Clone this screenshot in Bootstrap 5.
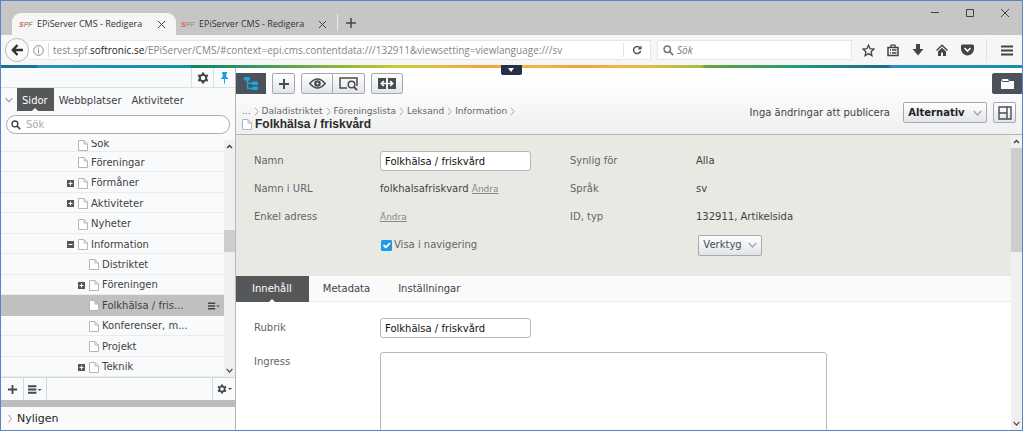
<!DOCTYPE html>
<html lang="sv">
<head>
<meta charset="utf-8">
<meta name="viewport" content="width=device-width, initial-scale=1">
<title>EPiServer CMS - Redigera</title>
<link href="https://cdn.jsdelivr.net/npm/bootstrap@5.3.0/dist/css/bootstrap.min.css" rel="stylesheet">
<style>
  body { font-family: "DejaVu Sans", sans-serif; font-size: 10px; line-height: 14px; color: #3f4244; }
  button, input, textarea { font: inherit; color: inherit; }
  svg { display: block; flex: none; }
  .app-window { border: 1px solid #5b82c8; background: #fff; }

  /* browser frame */
  .browser-ui { font-family: "Open Sans", sans-serif; }
  .title-strip { height: 34px; background: #c6c6c6; padding-left: 11px; color: #333; }
  .page-tab { height: 22px; width: 161px; padding: 0 10px 0 5px; font-size: 9px; }
  .page-tab.current { background: #f6f6f6; border-radius: 9px 9px 0 0; width: 164px; padding: 0 10px 0 7px; }
  .plain-btn { background: none; border: 0; padding: 0; color: #444; display: flex; align-items: center; justify-content: center; }
  .favicon { font: italic bold 7px "Liberation Sans", sans-serif; color: #a98; width: 14px; }
  .favicon b { color: #e2574c; }
  .new-tab { height: 17px; }
  .window-btns { gap: 22px; padding: 5px 11px 0 0; }
  .address-row { height: 30px; background: #f6f6f6; padding-left: 4px; }
  .back-btn { width: 24px; height: 24px; border: 1px solid #bbb; border-radius: 50%; background: #fafafa; color: #333; }
  .field-box { height: 20px; background: #fff; border: 1px solid #e6e6e6; }
  .address-field { padding-left: 4px; border-left: 0; }
  .address-text { font-size: 10px; color: #858585; border-left: 1px solid #ddd; padding-left: 4px; margin-left: 4px; }
  .address-text b { color: #222; font-weight: 400; }
  .search-field { width: 195px; margin-left: 6px; padding: 0 5px; color: #777; }
  .search-field input { border: 0; outline: 0; width: 100%; font-size: 10px; font-style: italic; padding: 0 0 0 3px; background: none; }
  .search-field input::placeholder { color: #777; opacity: 1; }
  .browser-tools { width: 170px; padding: 0 9px 0 10px; color: #444; }
  .browser-tools .menu-btn { border-left: 1px solid #e2e2e2; padding-left: 14px; height: 24px; }
  .rainbow { height: 3px; background: linear-gradient(90deg,#1a6f91 0,#1c7396 3.5%,#2a8cc4 3.6%,#178fb0 14%,#0f97a4 18.4%,#118262 18.8%,#2f9566 24%,#8db53c 33%,#cbc937 39%,#efb23c 45%,#f3a43a 47%,#f2b53e 53%,#eda338 57%,#f3b43e 60%,#ddbd3c 64%,#a4bb45 68.6%,#67a33c 69%,#239a78 78%,#1a6a8f 86.8%,#2b8ec6 87.3%,#1590a8 100%); }
  .drop-handle { position: absolute; left: 50%; top: -3px; width: 21px; height: 10px; margin-left: -11px; background: #22304a; color: #fff; border-radius: 0 0 2px 2px; z-index: 2; }
  .workspace, .fill-area { min-height: 0; }

  /* navigation pane */
  .side-pane { width: 235px; border-right: 1px solid #b4b8bb; background: #f9fafb; }
  .pane-tools { height: 20px; border-bottom: 1px solid #dcdfe0; }
  .pane-tools button { width: 22px; border-left: 1px solid #dcdfe0; }
  .pane-tabs { height: 23px; }
  .pane-tabs a, .form-tabs a { color: #3f4244; text-decoration: none; position: relative; display: flex; align-items: center; }
  .pane-tabs a { padding: 2px 5px 0; }
  .pane-tabs a.chosen, .form-tabs a.chosen { background: #555759; color: #fff; }
  .pane-tabs a.chosen { padding: 2px 6px 0 5px; }
  a.chosen::after { content: ""; position: absolute; bottom: 0; left: 50%; margin-left: -3px; border: 3px solid transparent; border-top: 0; border-bottom-color: #fff; }
  .tree-search { height: 19px; margin: 4px 5px 6px; border: 1px solid #a9adb0; border-radius: 10px; background: #fff; padding: 0 4px; }
  .tree-search input { border: 0; outline: 0; background: none; width: 100%; padding: 0 5px; }
  .tree-search input::placeholder { color: #aaa; opacity: 1; }
  .tree-row { flex: 1 1 0; min-height: 20px; max-height: 21px; border-bottom: 1px solid #e9eceb; padding: 2px 0 0 66px; }
  .tree-row.partial { flex: 0 0 12px; min-height: 0; padding-top: 0; overflow: hidden; align-items: flex-end; }
  .tree-row.deep { padding-left: 77px; }
  .tree-row.picked { background: #c0c0c0; border-color: #c0c0c0; }
  .twisty { width: 7px; color: #555; margin-right: 4px; }
  .page-icon { margin-right: 3px; }
  .scroller { width: 11px; background: #f0f0f1; color: #444; }
  .scroller .arrow { height: 13px; }
  .scroller .thumb { background: #cdcdcd; }
  .pane-foot { height: 23px; border-top: 1px solid #d5d8da; }
  .pane-foot button { width: 23px; border-right: 1px solid #d5d8da; color: #45484a; }
  .pane-foot button:last-child { border-right: 0; border-left: 1px solid #d5d8da; }
  .splitter { height: 7px; background: #b9bdc0; }
  .recent { height: 23px; font-size: 11px; background: #fafafa; color: #222; border: 0; padding: 0 6px; gap: 4px; }

  /* editing area */
  .edit-head { height: 67px; background: linear-gradient(#fff 20%, #eeeff0); border-bottom: 1px solid #b2b5b7; padding-top: 5px; }
  .head-tools { gap: 6px; }
  .tool-btn { border: 1px solid #a6a9b3; border-radius: 2px; background: linear-gradient(#fff, #e2e4e8); color: #484d54; padding: 0; width: 23px; height: 21px; display: flex; align-items: center; justify-content: center; }
  .tool-btn.wide { width: 32px; }
  .dark-btn { background: #4c5259; border-color: #4c5259; color: #fff; width: 30px; }
  .head-info { padding: 5px 6px 0; }
  .head-actions { gap: 6px; padding-top: 3px; }
  .options-btn { width: 84px; gap: 8px; margin-left: 7px; color: #222; }
  .crumbs { font-size: 9px; gap: 3px; line-height: 13px; padding-top: 6px; }
  .crumbs, .crumbs a { color: #666; text-decoration: none; }
  .crumbs svg { color: #aaa; }
  .page-name { font: bold 12px/13px "Liberation Sans", sans-serif; color: #2b2b2b; margin: 0; }
  .props { background: #e8e9e3; padding: 12px 18px 17px; }
  .props-grid { display: grid; grid-template-columns: 126px 190px 126px 1fr; grid-auto-rows: 28px; align-items: center; }
  .caption { color: #62666a; }
  .value-box { width: 151px; height: 20px; border: 1px solid #b5b8ba; border-radius: 3px; background: #fff; color: #111; padding: 0 4px; }
  .change-link { font-size: 9px; color: #888; }
  .form-check-input.tick { width: 11px; height: 11px; margin: 0 2px 0 1px; border-radius: 1px; }
  .tick:checked { background-color: #1e9be8; border-color: #1e9be8; background-size: 12px; }
  .work-btn { width: 64px; gap: 6px; margin-left: 2px; }
  .form-tabs { height: 26px; background: #fafafa; border-bottom: 1px solid #eee; }
  .form-tabs a { padding: 0 14px; }
  .form-tabs a.chosen { padding: 0 17px 0 16px; height: 26px; }
  .fields { display: grid; grid-template-columns: 126px 447px; row-gap: 14px; padding: 16px 18px 0; }
  .fields .caption { padding-top: 3px; }
  .intro-box { width: 447px; height: 120px; border: 1px solid #b5b8ba; border-radius: 3px; resize: none; }
</style>
</head>
<body>
<svg width="0" height="0" class="position-absolute" aria-hidden="true">
  <symbol id="i-x" viewBox="0 0 9 9"><path d="M1 1l7 7M8 1L1 8" stroke="currentColor" fill="none"/></symbol>
  <symbol id="i-plus" viewBox="0 0 12 12"><path d="M6 1v10M1 6h10" stroke="currentColor" stroke-width="2" fill="none"/></symbol>
  <symbol id="i-doc" viewBox="0 0 10 11"><path d="M.5.5h5.500L9.500 4v6.500h-9zM6 .5V4h3.500" fill="#fff" stroke="#b3b6b8"/></symbol>
  <symbol id="i-more" viewBox="0 0 7 7"><path d="M0 0h7v7H0z" fill="#555"/><path d="M1.500 3.500h4M3.500 1.500v4" stroke="#fff"/></symbol>
  <symbol id="i-less" viewBox="0 0 7 7"><path d="M0 0h7v7H0z" fill="#555"/><path d="M1.500 3.500h4" stroke="#fff"/></symbol>
  <symbol id="i-gear" viewBox="0 0 12 12"><circle cx="6" cy="6" r="3.200" fill="none" stroke="currentColor" stroke-width="2"/><path d="M6 .5v2M6 9.500v2M1.200 3.200l1.800 1M9 7.800l1.800 1M1.200 8.800l1.800-1M9 4.200l1.800-1" stroke="currentColor" stroke-width="2.300"/></symbol>
  <symbol id="i-list" viewBox="0 0 15 9"><path d="M0 1h9M0 4.500h9M0 8h9" stroke="currentColor" stroke-width="2"/><path d="M10.500 4h4l-2 2z" fill="currentColor"/></symbol>
  <symbol id="i-up" viewBox="0 0 7 5"><path d="M1 4l2.500-2.500L6 4" fill="none" stroke="currentColor" stroke-width="1.500"/></symbol>
  <symbol id="i-down" viewBox="0 0 9 6"><path d="M.8 1l3.700 4 3.700-4" fill="none" stroke="currentColor" stroke-width="1.500"/></symbol>
  <symbol id="i-right" viewBox="0 0 5 9"><path d="M1 .8l3 3.700-3 3.700" fill="none" stroke="currentColor"/></symbol>
  <symbol id="i-lens" viewBox="0 0 11 11"><circle cx="4.300" cy="4.300" r="3.200" fill="none" stroke="currentColor" stroke-width="1.500"/><path d="M6.700 6.700l3.500 3.500" stroke="currentColor" stroke-width="1.800"/></symbol>
</svg>

<div class="app-window vh-100 d-flex flex-column overflow-hidden">
  <header class="browser-ui flex-shrink-0">
    <div class="title-strip d-flex align-items-end">
      <div class="page-tab current d-flex align-items-center">
        <span class="favicon"><b>S</b>PF</span><span class="ms-1 flex-fill">EPiServer CMS - Redigera</span>
        <button class="plain-btn" aria-label="Stäng flik"><svg width="9" height="9"><use href="#i-x"/></svg></button>
      </div>
      <div class="page-tab d-flex align-items-center">
        <span class="favicon"><b>S</b>PF</span><span class="ms-1 flex-fill">EPiServer CMS - Redigera</span>
        <button class="plain-btn" aria-label="Stäng flik"><svg width="9" height="9"><use href="#i-x"/></svg></button>
      </div>
      <button class="plain-btn new-tab border-start border-secondary-subtle align-self-end mb-1 ps-2" aria-label="Ny flik"><svg width="10" height="10" viewBox="0 0 10 10"><path d="M5 0v10M0 5h10" stroke="currentColor" stroke-width="1.500"/></svg></button>
      <div class="window-btns d-flex ms-auto align-self-start">
        <button class="plain-btn" aria-label="Minimera"><svg width="13" height="13"><path d="M3 6.500h8" stroke="currentColor"/></svg></button>
        <button class="plain-btn" aria-label="Maximera"><svg width="13" height="13"><path d="M3.500 3.500h7v7h-7z" fill="none" stroke="currentColor"/></svg></button>
        <button class="plain-btn" aria-label="Stäng"><svg width="13" height="13" viewBox="-3 -3 13 13"><path d="M0 0l8 8M8 0L0 8" stroke="currentColor"/></svg></button>
      </div>
    </div>
    <div class="address-row d-flex align-items-center">
      <button class="plain-btn back-btn flex-shrink-0" aria-label="Bakåt"><svg width="12" height="12" viewBox="0 0 12 12"><path d="M6.500 1L1.800 6l4.700 5M2 6h10" fill="none" stroke="currentColor" stroke-width="2.400"/></svg></button>
      <div class="field-box address-field d-flex align-items-center flex-fill">
        <svg width="11" height="11" viewBox="0 0 11 11"><circle cx="5.500" cy="5.500" r="4.800" fill="none" stroke="#888"/><path d="M5.500 4.600V8.500M5.500 2.500v1.200" stroke="#888"/></svg>
        <span class="address-text flex-fill text-nowrap">test.spf.<b>softronic.se</b>/EPiServer/CMS/#context=epi.cms.contentdata:///132911&amp;viewsetting=viewlanguage:///sv</span>
        <button class="plain-btn border-start h-75 px-2" aria-label="Uppdatera"><svg width="10" height="10" viewBox="0 0 10 10"><path d="M8 2.800A3.600 3.600 0 1 0 8.600 6" fill="none" stroke="#555" stroke-width="1.500"/><path d="M9.500.5v4h-4z" fill="#555"/></svg></button>
      </div>
      <div class="field-box search-field d-flex align-items-center">
        <svg width="11" height="11"><use href="#i-lens"/></svg>
        <input type="search" placeholder="Sök" aria-label="Sök på webben">
      </div>
      <div class="browser-tools d-flex align-items-center justify-content-between">
        <button class="plain-btn" aria-label="Bokmärk"><svg width="13" height="13" viewBox="0 0 13 13"><path d="M6.500 1.200l1.600 3.500 3.900.4-2.900 2.600.8 3.900-3.400-2-3.400 2 .8-3.900L1 5.100l3.900-.4z" fill="none" stroke="currentColor" stroke-width="1.300"/></svg></button>
        <button class="plain-btn" aria-label="Bokmärken"><svg width="12" height="13" viewBox="0 0 12 13"><path d="M1 3.500h10v8H1z" fill="none" stroke="currentColor" stroke-width="1.500"/><path d="M4 3V1.200h4V3M3 6h1M5 6h4.500M3 9h1M5 9h4.500" fill="none" stroke="currentColor" stroke-width="1.300"/></svg></button>
        <button class="plain-btn" aria-label="Hämtningar"><svg width="12" height="12" viewBox="0 0 12 12"><path d="M4 0h4v5h3.500L6 11.500.5 5H4z" fill="currentColor"/></svg></button>
        <button class="plain-btn" aria-label="Hem"><svg width="12" height="12" viewBox="0 0 12 12"><path d="M.5 6.500L6 1.300l5.500 5.200" fill="none" stroke="currentColor" stroke-width="1.500"/><path d="M6 3.800l4 3.700V12H7V8.500H5V12H2V7.500z" fill="currentColor"/></svg></button>
        <button class="plain-btn" aria-label="Pocket"><svg width="13" height="12" viewBox="0 0 13 12"><path d="M1.500.5h10a1.500 1.500 0 0 1 1.500 1.500v3a6.500 6.500 0 0 1-13 0V2A1.500 1.500 0 0 1 1.500.5z" fill="currentColor"/><path d="M3.500 4l3 3 3-3" fill="none" stroke="#fff" stroke-width="1.600"/></svg></button>
        <button class="plain-btn menu-btn" aria-label="Meny"><svg width="12" height="11" viewBox="0 0 12 11"><path d="M0 1.500h12M0 5.500h12M0 9.500h12" stroke="currentColor" stroke-width="2.200"/></svg></button>
      </div>
    </div>
    <div class="rainbow"></div>
  </header>

  <div class="workspace d-flex flex-fill position-relative">
    <button class="plain-btn drop-handle" aria-label="Visa global meny"><svg width="6" height="4"><path d="M0 0h6L3 4z" fill="#fff"/></svg></button>

    <aside class="side-pane d-flex flex-column flex-shrink-0">
      <div class="pane-tools d-flex justify-content-end flex-shrink-0">
        <button class="plain-btn" aria-label="Inställningar"><svg width="12" height="12"><use href="#i-gear"/></svg></button>
        <button class="plain-btn" aria-label="Fäst"><svg width="9" height="12" viewBox="0 0 9 12"><path d="M2 0h5v1.200L6.300 2v2.500L8.500 7h-8l2.200-2.500V2L2 1.200zM4 7h1v4.500H4z" fill="#1c9fe0"/></svg></button>
      </div>
      <nav class="pane-tabs d-flex flex-shrink-0">
        <button class="plain-btn px-1" aria-label="Fäll ihop"><svg width="8" height="6" color="#aaa"><use href="#i-down"/></svg></button>
        <a href="#" class="chosen">Sidor</a><a href="#">Webbplatser</a><a href="#">Aktiviteter</a>
      </nav>
      <div class="tree-search d-flex align-items-center flex-shrink-0">
        <svg width="10" height="10"><use href="#i-lens"/></svg><input type="search" placeholder="Sök" aria-label="Sök sidor">
      </div>
      <div class="fill-area d-flex flex-fill">
        <div class="d-flex flex-column flex-fill overflow-hidden">
          <div class="tree-row partial d-flex"><span class="twisty"></span><svg class="page-icon" width="10" height="11"><use href="#i-doc"/></svg>Sök</div>
          <div class="tree-row d-flex align-items-center"><span class="twisty"></span><svg class="page-icon" width="10" height="11"><use href="#i-doc"/></svg>Föreningar</div>
          <div class="tree-row d-flex align-items-center"><svg class="twisty" height="7"><use href="#i-more"/></svg><svg class="page-icon" width="10" height="11"><use href="#i-doc"/></svg>Förmåner</div>
          <div class="tree-row d-flex align-items-center"><svg class="twisty" height="7"><use href="#i-more"/></svg><svg class="page-icon" width="10" height="11"><use href="#i-doc"/></svg>Aktiviteter</div>
          <div class="tree-row d-flex align-items-center"><span class="twisty"></span><svg class="page-icon" width="10" height="11"><use href="#i-doc"/></svg>Nyheter</div>
          <div class="tree-row d-flex align-items-center"><svg class="twisty" height="7"><use href="#i-less"/></svg><svg class="page-icon" width="10" height="11"><use href="#i-doc"/></svg>Information</div>
          <div class="tree-row deep d-flex align-items-center"><span class="twisty"></span><svg class="page-icon" width="10" height="11"><use href="#i-doc"/></svg>Distriktet</div>
          <div class="tree-row deep d-flex align-items-center"><svg class="twisty" height="7"><use href="#i-more"/></svg><svg class="page-icon" width="10" height="11"><use href="#i-doc"/></svg>Föreningen</div>
          <div class="tree-row deep picked d-flex align-items-center"><span class="twisty"></span><svg class="page-icon" width="10" height="11"><use href="#i-doc"/></svg>Folkhälsa / fris...<button class="plain-btn ms-auto me-1" aria-label="Sidmeny"><svg width="12" height="8"><use href="#i-list"/></svg></button></div>
          <div class="tree-row deep d-flex align-items-center"><span class="twisty"></span><svg class="page-icon" width="10" height="11"><use href="#i-doc"/></svg>Konferenser, m...</div>
          <div class="tree-row deep d-flex align-items-center"><span class="twisty"></span><svg class="page-icon" width="10" height="11"><use href="#i-doc"/></svg>Projekt</div>
          <div class="tree-row deep d-flex align-items-center"><svg class="twisty" height="7"><use href="#i-more"/></svg><svg class="page-icon" width="10" height="11"><use href="#i-doc"/></svg>Teknik</div>
        </div>
        <div class="scroller d-flex flex-column" aria-hidden="true">
          <div class="arrow d-flex align-items-center justify-content-center"><svg width="7" height="5"><use href="#i-up"/></svg></div>
          <div style="flex:77 1 0"></div><div class="thumb" style="flex:22 1 0"></div><div style="flex:112 1 0"></div>
          <div class="arrow d-flex align-items-center justify-content-center"><svg width="7" height="5"><use href="#i-down"/></svg></div>
        </div>
      </div>
      <div class="pane-foot d-flex flex-shrink-0">
        <button class="plain-btn" aria-label="Ny sida"><svg width="11" height="11"><use href="#i-plus"/></svg></button>
        <button class="plain-btn" aria-label="Alternativ för sida"><svg width="14" height="9"><use href="#i-list"/></svg></button>
        <button class="plain-btn ms-auto" aria-label="Panelinställningar"><svg width="10" height="10"><use href="#i-gear"/></svg><svg width="5" height="4"><path d="M1 1h4L3 3z" fill="currentColor"/></svg></button>
      </div>
      <div class="splitter flex-shrink-0"></div>
      <button class="recent d-flex align-items-center flex-shrink-0"><svg width="6" height="9" viewBox="0 0 6 9" color="#999"><use href="#i-right"/></svg>Nyligen</button>
    </aside>

    <main class="d-flex flex-column flex-fill">
      <div class="edit-head flex-shrink-0">
        <div class="head-tools d-flex">
          <button class="tool-btn dark-btn rounded-0" aria-label="Navigeringspanel"><svg width="14" height="13" viewBox="0 0 14 13"><path d="M0 0h6v3.500H0zM8 4.500h6V8H8zM8 9.500h6V13H8z" fill="#1ba3e4"/><path d="M3.500 3v8.500H8M3.500 6.200H8" fill="none" stroke="#1ba3e4" stroke-width="1.500"/></svg></button>
          <button class="tool-btn" aria-label="Lägg till"><svg width="12" height="12"><use href="#i-plus"/></svg></button>
          <div class="btn-group">
            <button class="tool-btn wide rounded-end-0" aria-label="Förhandsgranska"><svg width="17" height="11" viewBox="0 0 17 11"><path d="M.8 5.500Q8.500-3.500 16.200 5.500 8.500 14.500.8 5.500z" fill="none" stroke="currentColor" stroke-width="1.600"/><circle cx="8.500" cy="5.500" r="3.300" fill="currentColor"/><circle cx="8.500" cy="5.500" r="1" fill="#fff"/></svg></button>
            <button class="tool-btn wide rounded-start-0 border-start-0" aria-label="Vyinställningar"><svg width="19" height="15" viewBox="0 0 19 15"><path d="M8 12H1V2h17v8" fill="none" stroke="currentColor" stroke-width="1.500"/><circle cx="12.500" cy="8.500" r="3.300" fill="none" stroke="currentColor" stroke-width="1.500"/><path d="M15 11l3 3" stroke="currentColor" stroke-width="1.800"/></svg></button>
          </div>
          <button class="tool-btn wide" aria-label="Jämför"><svg width="18" height="11" viewBox="0 0 18 11"><path d="M0 0h8v11H0zM10 0h8v11h-8z" fill="currentColor"/><path d="M3.500 5.500H8M5.800 3L3.300 5.500 5.800 8M10 5.500h4.500M12.200 3l2.500 2.500L12.200 8" fill="none" stroke="#fff" stroke-width="1.500"/></svg></button>
          <button class="tool-btn dark-btn rounded-end-0 ms-auto" aria-label="Resurser"><svg width="13" height="10" viewBox="0 0 13 10"><path d="M1 0h6l1 2h5v8H0V2h1z" fill="#fff"/><path d="M1 2.500h7" stroke="#4c5259"/></svg></button>
        </div>
        <div class="head-info d-flex align-items-start justify-content-between">
          <div>
            <nav class="crumbs d-flex align-items-center" aria-label="Sökväg">
              <span>...</span><svg width="5" height="9"><use href="#i-right"/></svg>
              <a href="#">Daladistriktet</a><svg width="5" height="9"><use href="#i-right"/></svg>
              <a href="#">Föreningslista</a><svg width="5" height="9"><use href="#i-right"/></svg>
              <a href="#">Leksand</a><svg width="5" height="9"><use href="#i-right"/></svg>
              <a href="#">Information</a><svg width="5" height="9"><use href="#i-right"/></svg>
            </nav>
            <div class="d-flex align-items-center"><svg class="page-icon" width="10" height="11"><use href="#i-doc"/></svg><h1 class="page-name">Folkhälsa / friskvård</h1></div>
          </div>
          <div class="head-actions d-flex align-items-center">
            <span class="text-nowrap">Inga ändringar att publicera</span>
            <button class="tool-btn options-btn fw-bold">Alternativ<svg width="9" height="6" color="#aaa"><use href="#i-down"/></svg></button>
            <button class="tool-btn" aria-label="Byt vy"><svg width="14" height="14" viewBox="0 0 14 14"><path d="M1 1h12v12H1zM9 1v12M1 7h8" fill="none" stroke="currentColor" stroke-width="1.400"/></svg></button>
          </div>
        </div>
      </div>

      <div class="fill-area d-flex flex-fill">
        <div class="flex-fill overflow-hidden">
          <section class="props">
            <div class="props-grid">
              <label class="caption" for="namn">Namn</label><div><input id="namn" class="value-box" value="Folkhälsa / friskvård"></div>
              <span class="caption">Synlig för</span><span>Alla</span>
              <span class="caption">Namn i URL</span><span>folkhalsafriskvard <a href="#" class="change-link">Ändra</a></span>
              <span class="caption">Språk</span><span>sv</span>
              <span class="caption">Enkel adress</span><a href="#" class="change-link">Ändra</a>
              <span class="caption">ID, typ</span><span>132911, Artikelsida</span>
              <span></span>
              <div class="d-flex align-items-center"><input type="checkbox" id="visa" class="form-check-input tick" checked><label class="caption" for="visa">Visa i navigering</label></div>
              <span></span>
              <button class="tool-btn work-btn">Verktyg<svg width="9" height="6" color="#aaa"><use href="#i-down"/></svg></button>
            </div>
          </section>
          <nav class="form-tabs d-flex"><a href="#" class="chosen">Innehåll</a><a href="#">Metadata</a><a href="#">Inställningar</a></nav>
          <section class="fields">
            <label class="caption" for="rubrik">Rubrik</label><div><input id="rubrik" class="value-box" value="Folkhälsa / friskvård"></div>
            <label class="caption" for="ingress">Ingress</label><textarea id="ingress" class="intro-box"></textarea>
          </section>
        </div>
        <div class="scroller d-flex flex-column flex-shrink-0" aria-hidden="true">
          <div class="arrow d-flex align-items-center justify-content-center"><svg width="7" height="5"><use href="#i-up"/></svg></div>
          <div class="thumb" style="flex:104 1 0"></div><div style="flex:165 1 0"></div>
          <div class="arrow d-flex align-items-center justify-content-center"><svg width="7" height="5"><use href="#i-down"/></svg></div>
        </div>
      </div>
    </main>
  </div>
</div>
<script src="https://cdn.jsdelivr.net/npm/bootstrap@5.3.0/dist/js/bootstrap.bundle.min.js"></script>
</body>
</html>
